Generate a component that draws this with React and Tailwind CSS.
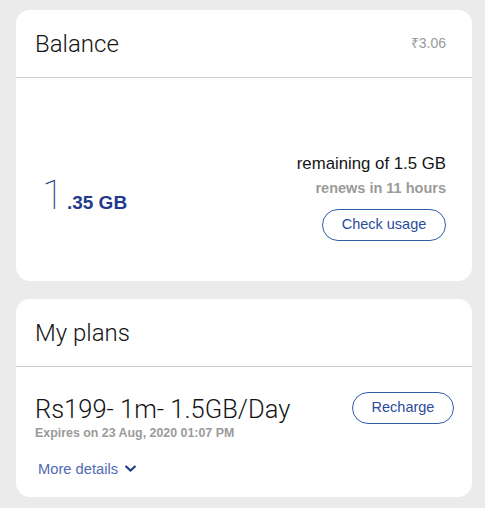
import React from "react";

export default function App() {
  return (
    <div className="min-h-[508px] w-[485px] bg-[#ebebeb] pl-4 pr-[13px] pt-[10px] pb-[11px] flex flex-col gap-[18px]" style={{ fontFamily: '"Liberation Sans", Arial, sans-serif' }}>
      <div className="bg-white rounded-[14px] h-[271px] flex flex-col">
        <div className="h-[68px] flex items-center justify-between pl-[19px] pr-[26px] border-b border-[#cfcfcf]">
          <span className="text-[24px] text-[#141414] font-['Roboto'] font-light">Balance</span>
          <span className="text-[14px] text-[#9a9a9a]">₹3.06</span>
        </div>
        <div className="flex-1 flex items-end justify-between pl-[26px] pr-[26px] pb-[40px]">
          <div className="flex items-baseline text-[#233a8c] mb-[24px]">
            <span className="text-[40px] leading-none font-['Roboto'] font-thin">1</span>
            <span className="ml-[3px] text-[19px] font-bold">.35 GB</span>
          </div>
          <div className="flex flex-col items-end">
            <span className="text-[16.8px] text-[#141414]">remaining of 1.5 GB</span>
            <span className="text-[14.5px] text-[#9a9a9a] font-bold mt-[2px]">renews in 11 hours</span>
            <button className="mt-[9px] h-[32px] w-[124px] rounded-full border border-[#2f5ea8] text-[14.5px] text-[#2b4c9b]">Check usage</button>
          </div>
        </div>
      </div>
      <div className="bg-white rounded-[14px] h-[198px] flex flex-col">
        <div className="h-[68px] flex items-center pl-[19px] border-b border-[#cfcfcf]">
          <span className="text-[24px] text-[#141414] font-['Roboto'] font-light">My plans</span>
        </div>
        <div className="flex justify-between pl-[19px] pr-[18px] pt-[28px]">
          <div className="flex flex-col">
            <span className="text-[25.5px] leading-[28px] text-[#141414] font-['Roboto'] font-light">Rs199- 1m- 1.5GB/Day</span>
            <span className="text-[12.4px] text-[#9a9a9a] font-bold mt-[1px]">Expires on 23 Aug, 2020 01:07 PM</span>
            <span className="mt-[15px] ml-[3px] flex items-center gap-[6px] text-[14.7px] text-[#5169b4]">
              More details
              <svg width="13" height="9" viewBox="0 0 13 9"><path d="M1.5 2 L6.5 6.5 L11.5 2" fill="none" stroke="#233a8c" strokeWidth="2.2" /></svg>
            </span>
          </div>
          <button className="h-[32px] w-[102px] rounded-full border border-[#2f5ea8] text-[14.5px] text-[#2b4c9b] -mt-[3px]">Recharge</button>
        </div>
      </div>
    </div>
  );
}
